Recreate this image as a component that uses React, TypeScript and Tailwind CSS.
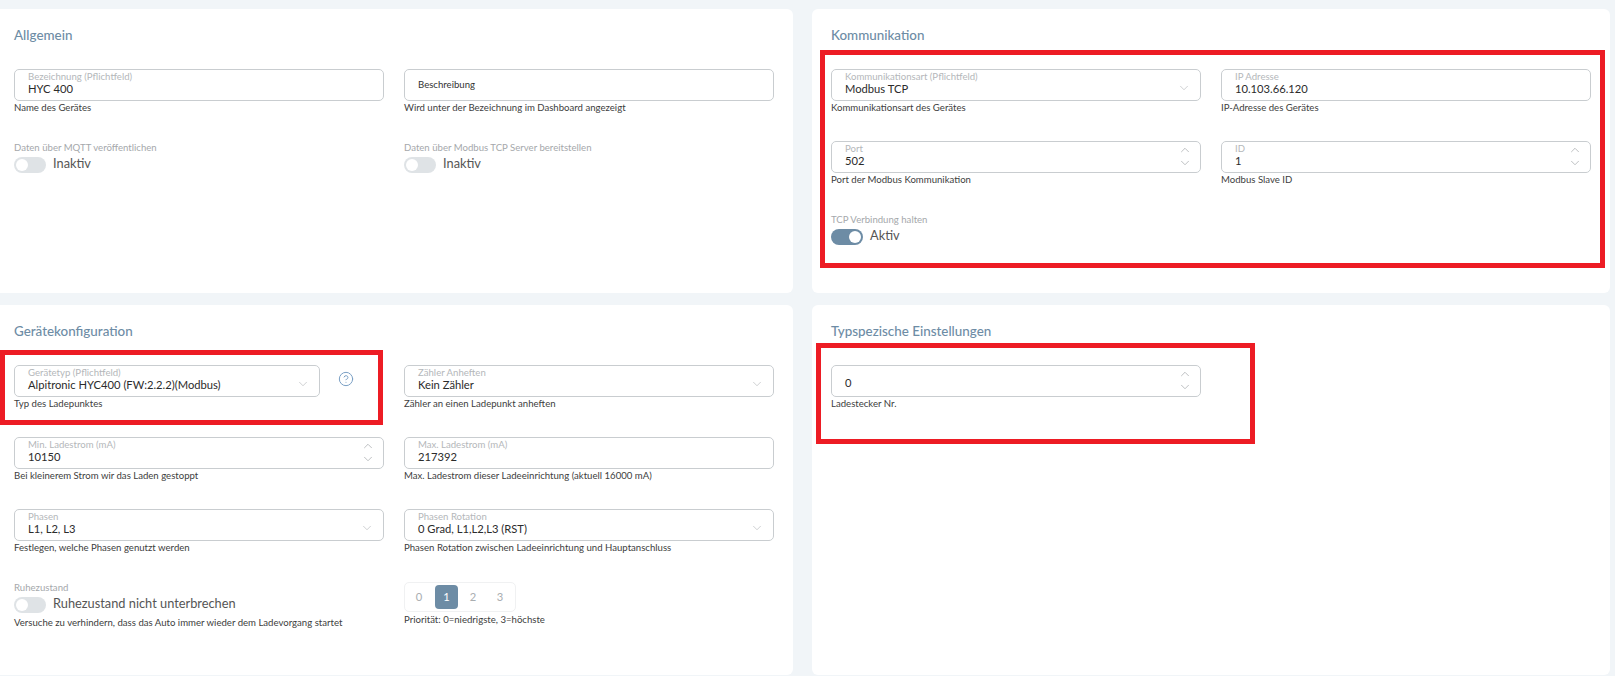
import { ChevronDown, ChevronUp, CircleHelp } from "lucide-react";

type FieldProps = {
  label?: string;
  value: string;
  helper: string;
  kind?: "text" | "select" | "number";
  valueClass?: string;
};

function Field({ label, value, helper, kind = "text", valueClass }: FieldProps) {
  return (
    <div className="h-[72px] min-w-0">
      <div className="relative h-8 rounded-[5px] border border-[#c9cdd0] bg-white pl-[13px] pr-8">
        {label ? (
          <>
            <div className="pt-[1.5px] text-[9.6px] leading-[10px] text-[#b4b7ba]">{label}</div>
            <div className="text-[11.2px] leading-[14px] text-[#2b2b2b]">{value}</div>
          </>
        ) : (
          <div className={valueClass ?? "text-[11.2px] leading-[30px] text-[#2b2b2b]"}>{value}</div>
        )}
        {kind === "select" && (
          <ChevronDown size={14} strokeWidth={1.1} className="absolute right-[9px] top-[11px] text-[#b4b7ba]" />
        )}
        {kind === "number" && (
          <div className="absolute right-2 top-[1px] flex flex-col text-[#a9adb0]">
            <ChevronUp size={14} strokeWidth={1.3} className="-mb-[1px]" />
            <ChevronDown size={14} strokeWidth={1.3} />
          </div>
        )}
      </div>
      <div className="text-[9.6px] leading-[14px] text-[#404040]">{helper}</div>
    </div>
  );
}

function Toggle({ label, text, on, helper }: { label: string; text: string; on?: boolean; helper?: string }) {
  return (
    <div>
      <div className="text-[9.6px] leading-[14px] text-[#a5a8ab]">{label}</div>
      <div className="mt-[2px] flex h-4 items-center gap-[7px]">
        <div className={`flex h-4 w-8 items-center rounded-full p-[2px] ${on ? "justify-end bg-[#6d8ca5]" : "bg-[#dfe3e6]"}`}>
          <div className="size-3 rounded-full bg-white" />
        </div>
        <span className="pb-1 text-[12.8px] leading-4 text-[#555]">{text}</span>
      </div>
      {helper && <div className="mt-[3px] text-[9.6px] leading-[14px] text-[#404040]">{helper}</div>}
    </div>
  );
}

function Panel({ title, className, children }: { title: string; className: string; children: React.ReactNode }) {
  return (
    <section className={`overflow-hidden bg-white ${className}`}>
      <h2 className="mb-6 mt-4 h-5 text-[13.4px] font-medium leading-5 text-[#6d8ca5]">{title}</h2>
      {children}
    </section>
  );
}

export default function App() {
  return (
    <div className="relative h-[676px] overflow-hidden bg-[#f1f5f8] pt-[9px] [font-family:Lato,sans-serif]">
      <div className="grid grid-cols-[793px_798px] grid-rows-[284px_370px] gap-x-[19px] gap-y-3">
        {/* Allgemein */}
        <Panel title="Allgemein" className="rounded-r-[6px] pl-[14px] pr-[19px]">
          <div className="grid grid-cols-2 gap-x-5">
            <Field label="Bezeichnung (Pflichtfeld)" value="HYC 400" helper="Name des Gerätes" />
            <Field value="Beschreibung" helper="Wird unter der Bezeichnung im Dashboard angezeigt" valueClass="text-[9.6px] leading-[30px] text-[#333]" />
            <Toggle label="Daten über MQTT veröffentlichen" text="Inaktiv" />
            <Toggle label="Daten über Modbus TCP Server bereitstellen" text="Inaktiv" />
          </div>
        </Panel>

        {/* Kommunikation */}
        <Panel title="Kommunikation" className="rounded-[6px] px-[19px]">
          <div className="grid grid-cols-2 gap-x-5">
            <Field label="Kommunikationsart (Pflichtfeld)" value="Modbus TCP" helper="Kommunikationsart des Gerätes" kind="select" />
            <Field label="IP Adresse" value="10.103.66.120" helper="IP-Adresse des Gerätes" />
            <Field label="Port" value="502" helper="Port der Modbus Kommunikation" kind="number" />
            <Field label="ID" value="1" helper="Modbus Slave ID" kind="number" />
            <Toggle label="TCP Verbindung halten" text="Aktiv" on />
          </div>
        </Panel>

        {/* Gerätekonfiguration */}
        <Panel title="Gerätekonfiguration" className="rounded-r-[6px] pl-[14px] pr-[19px]">
          <div className="grid grid-cols-2 gap-x-5">
            <div className="flex items-start">
              <div className="w-[306px] shrink-0">
                <Field label="Gerätetyp (Pflichtfeld)" value="Alpitronic HYC400 (FW:2.2.2)(Modbus)" helper="Typ des Ladepunktes" kind="select" />
              </div>
              <CircleHelp size={16} strokeWidth={1.5} className="ml-[18px] mt-[6px] text-[#7a9fc4]" />
            </div>
            <Field label="Zähler Anheften" value="Kein Zähler" helper="Zähler an einen Ladepunkt anheften" kind="select" />
            <Field label="Min. Ladestrom (mA)" value="10150" helper="Bei kleinerem Strom wir das Laden gestoppt" kind="number" />
            <Field label="Max. Ladestrom (mA)" value="217392" helper="Max. Ladestrom dieser Ladeeinrichtung (aktuell 16000 mA)" />
            <Field label="Phasen" value="L1, L2, L3" helper="Festlegen, welche Phasen genutzt werden" kind="select" />
            <Field label="Phasen Rotation" value="0 Grad, L1,L2,L3 (RST)" helper="Phasen Rotation zwischen Ladeeinrichtung und Hauptanschluss" kind="select" />
            <Toggle label="Ruhezustand" text="Ruhezustand nicht unterbrechen" helper="Versuche zu verhindern, dass das Auto immer wieder dem Ladevorgang startet" />
            <div className="pt-px">
              <div className="flex h-[30px] w-28 items-center rounded-[5px] border border-[#f0f1f2] text-[11.2px] text-[#a9adb0]">
                <span className="w-7 text-center">0</span>
                <span className="ml-[2px] flex h-6 w-[23px] items-center justify-center rounded-[4px] bg-[#6d8ca5] text-white">1</span>
                <span className="ml-[3px] w-6 text-center">2</span>
                <span className="ml-[3px] w-6 text-center">3</span>
              </div>
              <div className="mt-px text-[9.6px] leading-[14px] text-[#404040]">Priorität: 0=niedrigste, 3=höchste</div>
            </div>
          </div>
        </Panel>

        {/* Typspezische Einstellungen */}
        <Panel title="Typspezische Einstellungen" className="rounded-[6px] px-[19px]">
          <div className="grid grid-cols-2 gap-x-5">
            <Field value="0" helper="Ladestecker Nr." kind="number" valueClass="pt-[2px] text-[11.2px] leading-[30px] text-[#2b2b2b]" />
          </div>
        </Panel>
      </div>

      {/* Markierungen */}
      <div className="absolute left-[820px] top-[50px] h-[218px] w-[785px] border-[5px] border-[#ed1c24]" />
      <div className="absolute left-0 top-[350px] h-[75px] w-[383px] border-[5px] border-[#ed1c24]" />
      <div className="absolute left-[816px] top-[343px] h-[101px] w-[439px] border-[5px] border-[#ed1c24]" />
    </div>
  );
}
